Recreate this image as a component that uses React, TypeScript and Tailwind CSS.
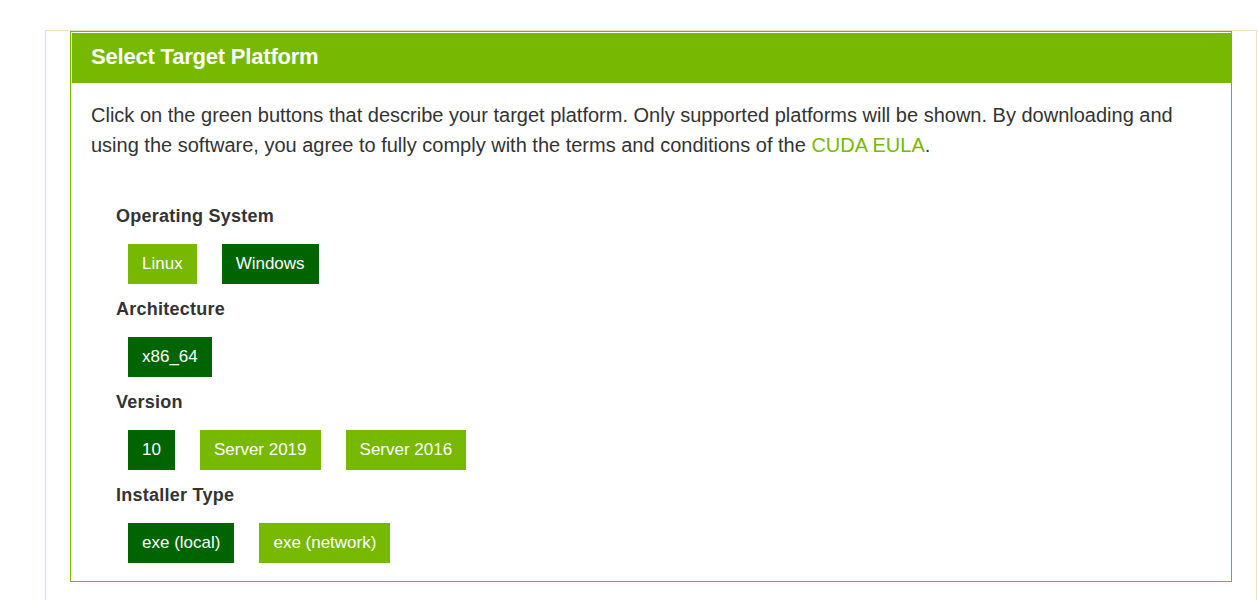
import React from "react";

type Btn = { label: string; active: boolean };
const sections: { title: string; buttons: Btn[] }[] = [
  { title: "Operating System", buttons: [{ label: "Linux", active: false }, { label: "Windows", active: true }] },
  { title: "Architecture", buttons: [{ label: "x86_64", active: true }] },
  {
    title: "Version",
    buttons: [
      { label: "10", active: true },
      { label: "Server 2019", active: false },
      { label: "Server 2016", active: false },
    ],
  },
  {
    title: "Installer Type",
    buttons: [
      { label: "exe (local)", active: true },
      { label: "exe (network)", active: false },
    ],
  },
];

export default function App() {
  return (
    <div
      className="w-[1258px] h-[600px] overflow-hidden bg-white pt-[30px] pl-[45px] pr-[1px]"
      style={{ fontFamily: '"Liberation Sans", Arial, sans-serif' }}
    >
      <div className="h-[570px] border-l border-t border-r border-[#ede2bd] pl-[24px] pr-[24px]">
        <div className="border border-[#76b900] pl-px pt-px">
          <div className="h-[50px] bg-[#76b900] pl-[19px] pb-[4px] flex items-center text-white text-[22px] font-bold tracking-[-0.2px]">
            Select Target Platform
          </div>
          <div className="pl-[19px] pr-[20px] pt-[17px] pb-[18px]">
            <p className="text-[20px] leading-[30px] text-[#333]">
              Click on the green buttons that describe your target platform. Only supported platforms will be shown. By
              downloading and using the software, you agree to fully comply with the terms and conditions of the{" "}
              <span className="text-[#76b900]">CUDA EULA</span>.
            </p>
            <div className="pl-[25px] pt-[41px]">
              {sections.map((s, i) => (
                <div key={s.title} className={i < sections.length - 1 ? "mb-[10px]" : ""}>
                  <div className="text-[18px] leading-[30px] font-bold tracking-[0.25px] text-[#333]">{s.title}</div>
                  <div className="mt-[13px] pl-[12px] flex gap-[25px]">
                    {s.buttons.map((b) => (
                      <div
                        key={b.label}
                        className={
                          "h-[40px] px-[14px] flex items-center text-white text-[17px] " +
                          (b.active ? "bg-[#006400]" : "bg-[#76b900]")
                        }
                      >
                        {b.label}
                      </div>
                    ))}
                  </div>
                </div>
              ))}
            </div>
          </div>
        </div>
      </div>
    </div>
  );
}
